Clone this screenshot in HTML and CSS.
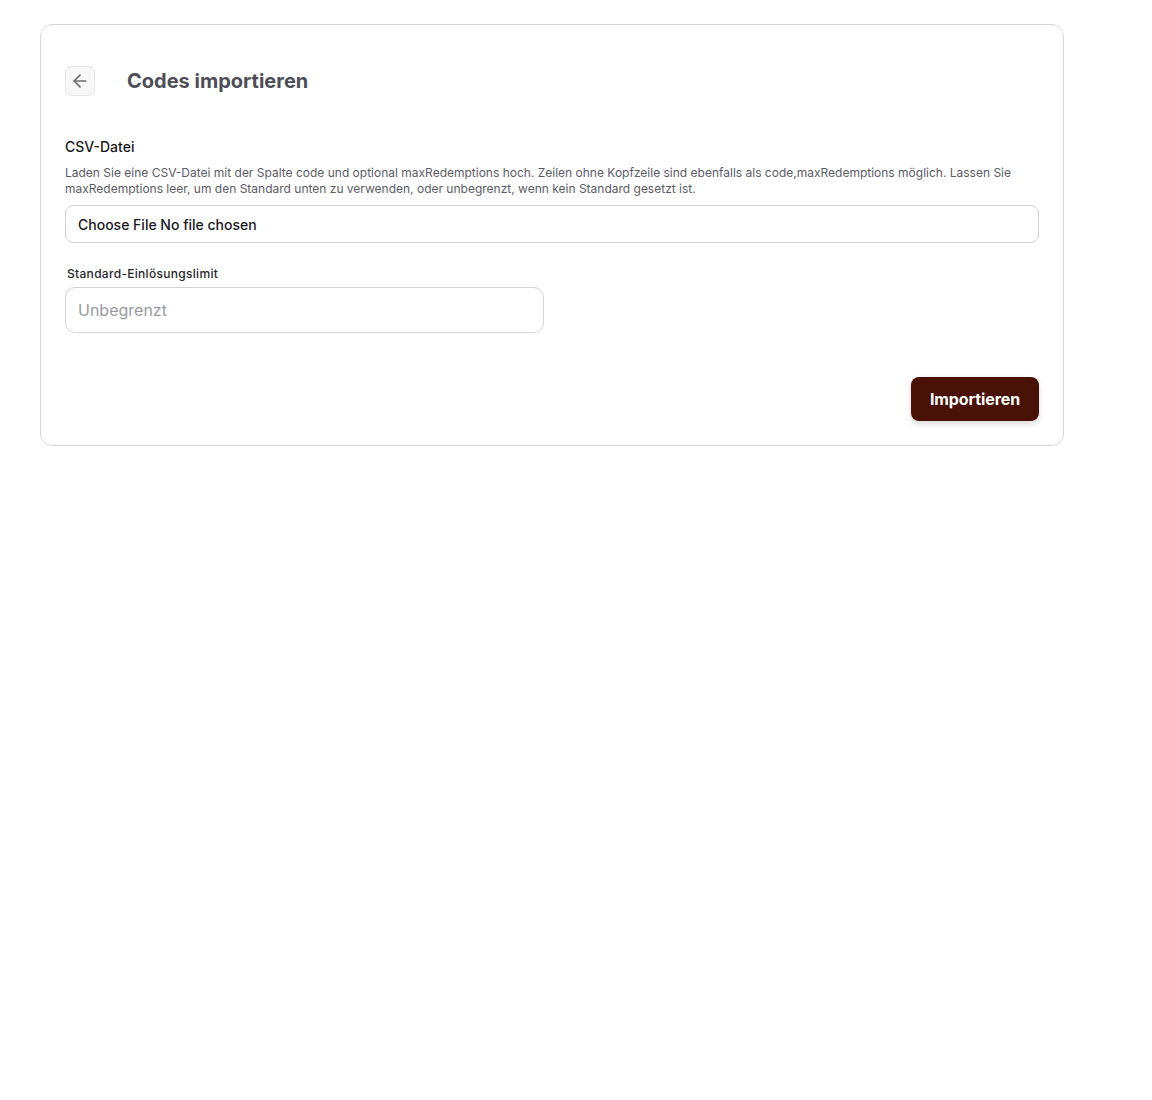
FILE: index.html
```html
<!DOCTYPE html>
<html lang="de">
<head>
<meta charset="utf-8">
<title>Codes importieren</title>
<link rel="stylesheet" href="styles.css">
</head>
<body>
<div class="card">
  <div class="header">
    <button class="back" type="button" aria-label="Zurück">
      <svg width="20" height="20" viewBox="0 0 24 24" fill="none" stroke="currentColor" stroke-width="2" stroke-linecap="round" stroke-linejoin="round"><path d="M12 19l-7-7 7-7"/><path d="M19 12H5"/></svg>
    </button>
    <h1 class="title">Codes importieren</h1>
  </div>
  <div class="field">
    <div class="label">CSV-Datei</div>
    <p class="desc">Laden Sie eine CSV-Datei mit der Spalte code und optional maxRedemptions hoch. Zeilen ohne Kopfzeile sind ebenfalls als code,maxRedemptions möglich. Lassen Sie maxRedemptions leer, um den Standard unten zu verwenden, oder unbegrenzt, wenn kein Standard gesetzt ist.</p>
    <div class="file">Choose File No file chosen</div>
  </div>
  <div class="grid">
    <div class="field2">
      <div class="label-sm">Standard-Einlösungslimit</div>
      <div class="input">Unbegrenzt</div>
    </div>
  </div>
  <div class="actions">
    <button class="primary" type="button">Importieren</button>
  </div>
</div>
</body>
</html>
```
FILE: styles.css
```css
* { box-sizing: border-box; }
body {
  margin: 0;
  padding: 24px 40px;
  font-family: Inter, "Liberation Sans", sans-serif;
  background: #fff;
  color: #18181b;
}
.card {
  width: 1024px;
  border: 1px solid #d8d8dc;
  border-radius: 12px;
  padding: 24px;
  background: #fff;
}
.header {
  height: 64px;
  display: flex;
  align-items: center;
  gap: 32px;
}
.back {
  width: 30px;
  height: 30px;
  border: 1px solid #e4e4e7;
  border-radius: 7px;
  background: #f7f7f8;
  color: #6b6b73;
  display: flex;
  align-items: center;
  justify-content: center;
  padding: 0;
}
.title {
  margin: 0;
  font-size: 20px;
  font-weight: 700;
  color: #4d4d57;
}
.field { margin-top: 24px; }
.label {
  font-size: 14px;
  line-height: 20px;
  font-weight: 500;
  color: #18181b;
}
.desc {
  margin: 8px 0 0;
  font-size: 12px;
  line-height: 16px;
  color: #5b5b66;
}
.file {
  margin-top: 8px;
  height: 38px;
  border: 1px solid #d4d4d8;
  border-radius: 8px;
  padding: 0 12px;
  display: flex;
  align-items: center;
  font-size: 14px;
  font-weight: 500;
  color: #18181b;
}
.grid {
  margin-top: 23px;
  display: grid;
  grid-template-columns: 1fr 1fr;
  gap: 16px;
}
.label-sm {
  padding-left: 2px;
  font-size: 12px;
  line-height: 16px;
  font-weight: 500;
  letter-spacing: 0.3px;
  color: #27272a;
}
.input {
  margin-top: 5px;
  height: 46px;
  border: 1px solid #d4d4d8;
  border-radius: 10px;
  padding: 0 12px;
  display: flex;
  align-items: center;
  font-size: 16px;
  color: #9a9aa2;
}
.actions {
  margin-top: 44px;
  display: flex;
  justify-content: flex-end;
}
.primary {
  height: 44px;
  padding: 0 19px;
  border: none;
  border-radius: 8px;
  background: #4a1206;
  color: #fff;
  font-family: inherit;
  font-size: 16px;
  font-weight: 700;
  letter-spacing: -0.1px;
  box-shadow: 0 3px 6px rgba(0,0,0,0.15);
}
```
